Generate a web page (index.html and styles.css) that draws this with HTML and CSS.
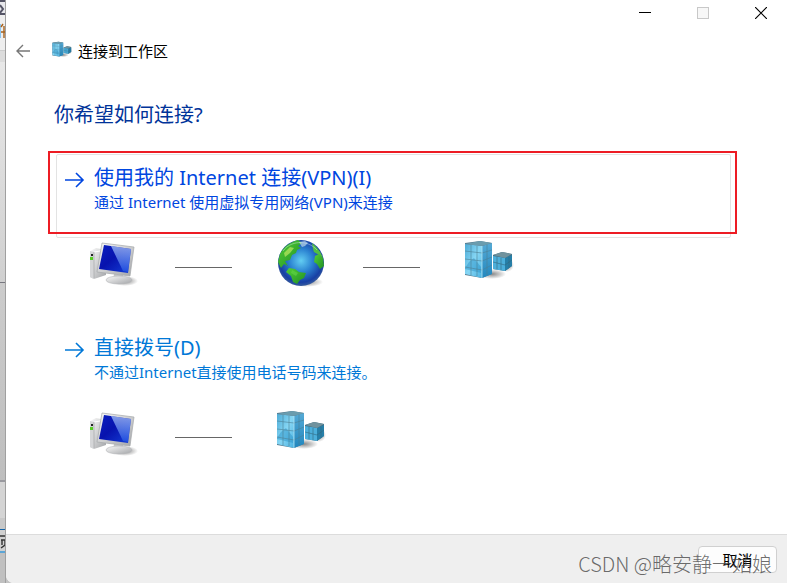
FILE: index.html
```html
<!DOCTYPE html>
<html lang="zh-CN">
<head>
    <meta charset="UTF-8">
    <meta name="viewport" content="width=device-width, initial-scale=1">
    <title>连接到工作区</title>
    <link rel="stylesheet" href="styles.css">
</head>
<body>
<svg class="sprite" aria-hidden="true">
    <defs>
        <linearGradient id="screen" x1="0" y1="0" x2="1" y2="1">
            <stop offset="0" stop-color="#0a1fc0"/>
            <stop offset="0.45" stop-color="#0713ae"/>
            <stop offset="1" stop-color="#1440d8"/>
        </linearGradient>
        <linearGradient id="shine" x1="0" y1="0" x2="0" y2="1">
            <stop offset="0" stop-color="#b8d4ff"/>
            <stop offset="1" stop-color="#2457e6"/>
        </linearGradient>
        <linearGradient id="metal" x1="0" y1="0" x2="1" y2="1">
            <stop offset="0" stop-color="#fafafa"/>
            <stop offset="1" stop-color="#a3a5a8"/>
        </linearGradient>
        <radialGradient id="sea" cx="0.5" cy="0.45" r="0.55">
            <stop offset="0" stop-color="#62cdf2"/>
            <stop offset="0.45" stop-color="#2c84d2"/>
            <stop offset="0.85" stop-color="#173fa4"/>
            <stop offset="1" stop-color="#375c9c"/>
        </radialGradient>
        <linearGradient id="land" x1="0" y1="0" x2="1" y2="1">
            <stop offset="0" stop-color="#54cf35"/>
            <stop offset="1" stop-color="#1f8e25"/>
        </linearGradient>
        <radialGradient id="shadow">
            <stop offset="0" stop-color="#555" stop-opacity="0.7"/>
            <stop offset="1" stop-color="#555" stop-opacity="0"/>
        </radialGradient>
        <linearGradient id="glass" x1="0" y1="0" x2="1" y2="1">
            <stop offset="0" stop-color="#4dabd6"/>
            <stop offset="0.5" stop-color="#86d6f4"/>
            <stop offset="1" stop-color="#4ab2e2"/>
        </linearGradient>
        <linearGradient id="glass-side" x1="0" y1="0" x2="0" y2="1">
            <stop offset="0" stop-color="#55aad6"/>
            <stop offset="1" stop-color="#2287be"/>
        </linearGradient>
    </defs>

    <symbol id="computer" viewBox="0 0 50 48">
        <ellipse cx="37" cy="41" rx="13" ry="5" fill="url(#shadow)"/>
        <path d="M2 11 L8 8 L18 10 L18 35 L6 39 L2 37 Z" fill="url(#metal)"/>
        <path d="M2 11 L6 12 L6 39 L2 37 Z" fill="#d5d6d8"/>
        <path d="M6 12 L18 10" stroke="#fff"/>
        <path d="M6 12 L6 38" stroke="#a6a8ab" stroke-width="0.7"/>
        <rect x="3" y="14" width="2" height="2" fill="#222"/>
        <rect x="2" y="17" width="3" height="3" fill="#58cf26"/>
        <path d="M26 34 L35 35 L35 41 L25 41 Z" fill="#c6c8ca"/>
        <ellipse cx="31" cy="40" rx="13" ry="4" fill="url(#metal)" stroke="#b4b6b8" stroke-width="0.6"/>
        <path d="M14 3 L46 7 L42 36 L9 32 Z" fill="url(#metal)" stroke="#a5a7ab" stroke-width="0.7"/>
        <path d="M16 5 L43 9 L40 33 L11 29 Z" fill="url(#screen)"/>
        <path d="M23 6 L43 9 L40 32 L35 31 Z" fill="url(#shine)" opacity="0.7"/>
    </symbol>

    <symbol id="globe" viewBox="0 0 50 48">
        <ellipse cx="30" cy="42" rx="17" ry="5" fill="url(#shadow)"/>
        <circle cx="25" cy="23" r="23" fill="url(#sea)"/>
        <path d="M4 14 C8 6 15 2 22 0 L26 3 L22 6 L25 8 L21 10 L20 13 L16 15 L14 20 L9 21 L12 26 L8 24 L5 28 L2 22 Z" fill="url(#land)"/>
        <path d="M8 13 L14 7 L18 8 L14 13 L9 17 Z" fill="#b4e65d" opacity="0.75"/>
        <path d="M23 2 L29 1 L32 3 L29 6 L26 7 Z" fill="#d3eaf0" opacity="0.6"/>
        <path d="M36 3 C41 7 45 12 47 18 L43 15 L38 12 L37 9 Z" fill="#51bd43"/>
        <path d="M39 16 L43 14 L47 18 L48 26 L44 29 L41 24 L38 22 Z" fill="url(#land)"/>
        <path d="M13 28 L19 29 L23 32 L30 33 L28 38 L24 40 L21 44 L17 42 L15 36 L10 32 Z" fill="url(#land)"/>
        <path d="M16 30 L22 33 L20 36 L15 33 Z" fill="#63d348" opacity="0.6"/>
        <path d="M7 11 C14 1 31 -1 41 10" fill="none" stroke="#dff3ff" stroke-opacity="0.4"/>
    </symbol>

    <symbol id="building" viewBox="0 0 50 48">
        <ellipse cx="28" cy="34" rx="14" ry="5" fill="url(#shadow)"/>
        <ellipse cx="43" cy="25" rx="7" ry="7" fill="url(#shadow)"/>
        <path d="M1 3 L16 1 L28 3 L28 34 L18 38 L1 35 Z" fill="#557b90"/>
        <path d="M1 4 L18 6 L18 38 L1 34 Z" fill="url(#glass)"/>
        <path d="M18 6 L28 3 L28 34 L18 38 Z" fill="url(#glass-side)"/>
        <path d="M1 4 L16 1 L28 3 L18 6 Z" fill="#6a9cae"/>
        <path d="M1 28 L5 22 L10 18 L17 27 L17 33 L1 29 Z" fill="#238ec5" opacity="0.45"/>
        <path d="M7 5 V35 M13 6 V36 M1 11 L18 13 L28 10 M1 19 L18 21 L28 17 M1 27 L18 30 L28 25 M23 5 V35" fill="none" stroke="#4b7f96" stroke-width="0.6"/>
        <path d="M18 6 V38" stroke="#b5e5f3" stroke-width="0.8"/>
        <path d="M29 15 L38 12 L48 14 L48 26 L41 31 L29 29 Z" fill="#426d82"/>
        <path d="M29 16 L41 18 L41 31 L29 29 Z" fill="#4cafdb"/>
        <path d="M41 18 L48 15 L48 26 L41 31 Z" fill="#267fa8"/>
        <path d="M29 15 L38 12 L48 14 L41 18 Z" fill="#70929d"/>
        <path d="M33 17 V29 M37 18 V30 M29 22 L41 25 L48 20 M45 17 V28" fill="none" stroke="#32687f" stroke-width="0.6"/>
    </symbol>

    <symbol id="arrow" viewBox="0 0 20 16">
        <path d="M0 8 H18 M11 1 L18 8 L11 15" fill="none" stroke="currentColor" stroke-width="1.6"/>
    </symbol>
</svg>

<div class="behind" aria-hidden="true">
    <svg class="behind-mark" width="6" height="34" viewBox="0 0 6 34">
        <path d="M0 1 L3 5 L0 9" fill="none" stroke="#555566" stroke-width="2"/>
        <rect y="20" width="1" height="14" fill="#8cc4ee"/>
        <path d="M1 23 L3 20 M1 28 H6 M4 22 V34" fill="none" stroke="#a8621c" stroke-width="1.4"/>
    </svg>
    <svg class="behind-mark" width="6" height="14" viewBox="0 0 6 14">
        <path d="M0 1 H6 M1 5 H5 V10 L1 13 M2 5 V10" fill="none" stroke="#333" stroke-width="1.4"/>
    </svg>
</div>

<div class="wizard">
    <div class="titlebar">
        <button type="button" class="caption" aria-label="最小化">
            <svg width="12" height="12"><path d="M0 5.5 H12" stroke="#000"/></svg>
        </button>
        <button type="button" class="caption" aria-label="最大化" disabled>
            <svg width="12" height="12"><rect x="0.5" y="0.5" width="11" height="11" fill="#f7f7f7" stroke="#c8c8c8"/></svg>
        </button>
        <button type="button" class="caption" aria-label="关闭">
            <svg width="12" height="12"><path d="M0 0 L12 12 M12 0 L0 12" stroke="#000" stroke-width="1.2"/></svg>
        </button>
    </div>

    <header class="header">
        <button type="button" class="back" aria-label="返回">
            <svg width="14" height="14" viewBox="0 0 14 14"><path d="M14 7 H1 M7 1 L1 7 L7 13" fill="none" stroke="#777" stroke-width="1.4"/></svg>
        </button>
        <svg class="header-icon"><use href="#building"/></svg>
        <span>连接到工作区</span>
    </header>

    <main class="content">
        <h1>你希望如何连接?</h1>

        <button type="button" class="option option-active">
            <svg class="arrow"><use href="#arrow"/></svg>
            <span class="option-text">
                <span class="option-title">使用我的 Internet 连接(VPN)(I)</span>
                <span class="option-desc">通过 Internet 使用虚拟专用网络(VPN)来连接</span>
            </span>
            <span class="highlight"></span>
        </button>
        <div class="diagram">
            <svg class="picture"><use href="#computer"/></svg>
            <span class="link"></span>
            <svg class="picture"><use href="#globe"/></svg>
            <span class="link"></span>
            <svg class="picture"><use href="#building"/></svg>
        </div>

        <button type="button" class="option">
            <svg class="arrow"><use href="#arrow"/></svg>
            <span class="option-text">
                <span class="option-title">直接拨号(D)</span>
                <span class="option-desc">不通过Internet直接使用电话号码来连接。</span>
            </span>
        </button>
        <div class="diagram">
            <svg class="picture"><use href="#computer"/></svg>
            <span class="link"></span>
            <svg class="picture"><use href="#building"/></svg>
        </div>
    </main>

    <footer class="footer">
        <button type="button" class="cancel">取消</button>
        <span class="watermark">CSDN @略安静一姑娘</span>
    </footer>
</div>
</body>
</html>
```

FILE: styles.css
```css
* {
    box-sizing: border-box;
}

body {
    margin: 0;
    min-height: 100vh;
    display: flex;
    background-color: #c4c4c4;
    font-family: "Noto Sans", "Noto Sans CJK SC", sans-serif;
    font-size: 15px;
    color: #000;
}

button {
    font: inherit;
    padding: 0;
    border: none;
    background: none;
}

.sprite {
    position: absolute;
    width: 0;
    height: 0;
}

/* sliver of the window behind the dialog */
.behind {
    width: 6px;
    flex: none;
    overflow: hidden;
    display: flex;
    flex-direction: column;
    justify-content: space-between;
    padding: 4px 0 34px;
    border-right: 1px solid #a0a0a0;
    background: linear-gradient(#555566 0 2px, #e8e8ec 2px 13px, #555566 13px 15px, #eeeeee 15px 50px, #cccccc 50px 51px, #dcdcdc 51px 62px, #e8e8e8 62px, #d0d0d0 282px, #77777f 282px 283px, #cccccc 283px, #bebebe 480px, #99999f 480px 482px, #d4d4d4 482px 518px, #c8c8c8 518px 529px, #1565a8 529px 530px, #d0d0d0 530px 551px, #5ba5d6 551px 553px, #c0c0c0 553px);
}

.behind-mark {
    flex: none;
}

.wizard {
    flex: 1;
    min-width: 0;
    display: flex;
    flex-direction: column;
    background-color: #fff;
    border-bottom-left-radius: 8px;
    overflow: hidden;
}

.titlebar {
    display: flex;
    justify-content: flex-end;
}

.caption {
    width: 58px;
    height: 26px;
    padding-left: 6px;
    display: flex;
    align-items: center;
    justify-content: center;
}

.header {
    display: flex;
    align-items: center;
    height: 50px;
    padding-left: 10px;
    line-height: 20px;
}

.back {
    display: flex;
    width: 14px;
    margin-right: 22px;
}

.header-icon {
    width: 20px;
    height: 20px;
    margin-right: 6px;
}

.content {
    padding: 22px 56px 24px 50px;
}

h1 {
    margin: 0 0 22px -2px;
    font-size: 20px;
    font-weight: normal;
    line-height: 34px;
    color: #003399;
}

.option {
    position: relative;
    display: flex;
    width: 100%;
    padding: 9px 8px 25px;
    border: 1px solid transparent;
    border-radius: 2px;
    text-align: left;
    color: #0078d7;
}

.option-active {
    border-color: #e3e3e3;
    color: #0046e0;
}

.arrow {
    width: 20px;
    height: 16px;
    margin: 8px 9px 0 0;
}

.option-text {
    display: flex;
    flex-direction: column;
}

.option-title {
    font-size: 20px;
    line-height: 28px;
}

.option-desc {
    line-height: 20px;
}

.highlight {
    position: absolute;
    top: -4px;
    right: -7px;
    bottom: 3px;
    left: -9px;
    border: 2px solid #ed1c24;
}

.diagram {
    display: flex;
    align-items: center;
    padding: 2px 0 36px 32px;
}

.picture {
    width: 50px;
    height: 48px;
}

.link {
    width: 57px;
    margin: 6px 44px 0 37px;
    border-top: 1px solid #666;
}

.footer {
    position: relative;
    display: flex;
    justify-content: flex-end;
    margin-top: auto;
    padding: 11px 10px 10px;
    border-top: 1px solid #dcdcdc;
    background-color: #efefef;
}

.cancel {
    width: 79px;
    height: 27px;
    border: 1px solid #d0d0d0;
    border-radius: 4px;
    background-color: #fdfdfd;
    line-height: 20px;
}

.watermark {
    position: absolute;
    right: 15px;
    bottom: 4px;
    font-family: "Noto Sans CJK SC", sans-serif;
    font-size: 20px;
    font-weight: 300;
    line-height: 30px;
    color: rgba(70, 70, 70, 0.8);
    pointer-events: none;
}
```
